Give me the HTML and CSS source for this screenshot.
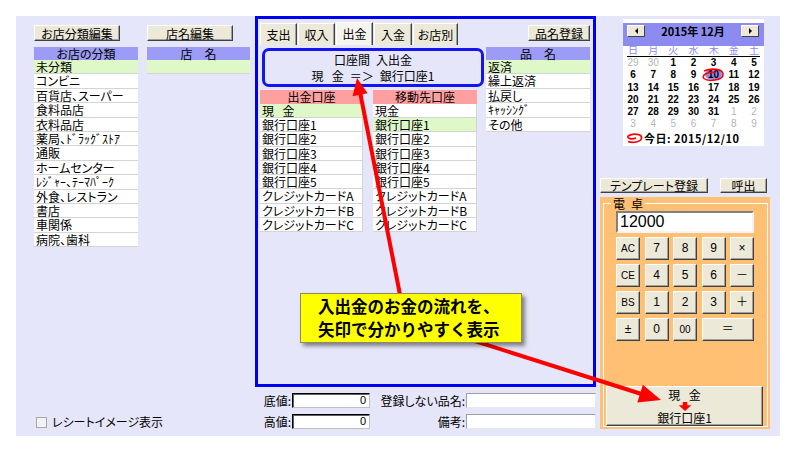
FILE: index.html
```html
<!DOCTYPE html>
<html lang="ja">
<head>
<meta charset="utf-8">
<title>家計簿</title>
<link rel="stylesheet" href="styles.css">
</head>
<body>
<div class="app">
  <div class="left">
    <div class="cols">
      <div class="col">
        <button class="btn btn-top">お店分類編集</button>
        <div class="hdr blue">お店の分類</div>
        <ul class="list">
          <li class="sel">未分類</li>
          <li>コンビニ</li>
          <li>百貨店、スーパー</li>
          <li>食料品店</li>
          <li>衣料品店</li>
          <li>薬局、ﾄﾞﾗｯｸﾞｽﾄｱ</li>
          <li>通販</li>
          <li>ホームセンター</li>
          <li>ﾚｼﾞｬｰ、ﾃｰﾏﾊﾟｰｸ</li>
          <li>外食、レストラン</li>
          <li>書店</li>
          <li>車関係</li>
          <li>病院、歯科</li>
        </ul>
      </div>
      <div class="col col2">
        <button class="btn btn-top">店名編集</button>
        <div class="hdr blue wide">店&ensp;&ensp;名</div>
        <ul class="list">
          <li class="sel"></li>
        </ul>
      </div>
    </div>
    <label class="chk"><span class="box"></span>レシートイメージ表示</label>
  </div>

  <div class="center">
    <div class="panel">
      <div class="tabs">
        <div class="tab w37">支出</div>
        <div class="tab w37">収入</div>
        <div class="tab w37 on">出金</div>
        <div class="tab w38">入金</div>
        <div class="tab w45">お店別</div>
        <button class="btn btn-reg">品名登録</button>
      </div>
      <div class="pbody">
        <div class="pleft">
          <div class="info">
            <div>口座間&ensp;入出金</div>
            <div>現&ensp;&thinsp;金&ensp;＝＞&ensp;銀行口座1</div>
          </div>
          <div class="mlists">
            <div class="mcol m1">
              <div class="hdr pink">出金口座</div>
              <ul class="list mlist">
                <li class="sel">現&ensp;&thinsp;金</li>
                <li>銀行口座1</li>
                <li>銀行口座2</li>
                <li>銀行口座3</li>
                <li>銀行口座4</li>
                <li>銀行口座5</li>
                <li>クレジットカードA</li>
                <li>クレジットカードB</li>
                <li>クレジットカードC</li>
              </ul>
            </div>
            <div class="mcol m2">
              <div class="hdr pink">移動先口座</div>
              <ul class="list mlist">
                <li>現金</li>
                <li class="sel">銀行口座1</li>
                <li>銀行口座2</li>
                <li>銀行口座3</li>
                <li>銀行口座4</li>
                <li>銀行口座5</li>
                <li>クレジットカードA</li>
                <li>クレジットカードB</li>
                <li>クレジットカードC</li>
              </ul>
            </div>
          </div>
        </div>
        <div class="pright">
          <div class="hdr blue wide">品&ensp;&ensp;名</div>
          <ul class="list ilist">
            <li class="sel">返済</li>
            <li>繰上返済</li>
            <li>払戻し</li>
            <li>ｷｬｯｼﾝｸﾞ</li>
            <li>その他</li>
          </ul>
        </div>
      </div>
    </div>
    <div class="form">
      <div class="lbl">底値:</div>
      <div class="inp dark">0</div>
      <div class="lbl">登録しない品名:</div>
      <div class="inp"></div>
      <div class="lbl">高値:</div>
      <div class="inp dark">0</div>
      <div class="lbl">備考:</div>
      <div class="inp"></div>
    </div>
  </div>

  <div class="right">
    <div class="cal">
      <div class="cal-head">
        <div class="cbtn"><span class="tri-l"></span></div>
        <div class="ctitle">2015年 12月</div>
        <div class="cbtn"><span class="tri-r"></span></div>
      </div>
      <div class="wk">
        <span>日</span><span>月</span><span>火</span><span>水</span><span>木</span><span>金</span><span>土</span>
      </div>
      <div class="days">
        <span class="g">29</span><span class="g">30</span><span>1</span><span>2</span><span>3</span><span>4</span><span>5</span>
        <span>6</span><span>7</span><span>8</span><span>9</span><span><b class="today">10</b></span><span>11</span><span>12</span>
        <span>13</span><span>14</span><span>15</span><span>16</span><span>17</span><span>18</span><span>19</span>
        <span>20</span><span>21</span><span>22</span><span>23</span><span>24</span><span>25</span><span>26</span>
        <span>27</span><span>28</span><span>29</span><span>30</span><span>31</span><span class="g">1</span><span class="g">2</span>
        <span class="g">3</span><span class="g">4</span><span class="g">5</span><span class="g">6</span><span class="g">7</span><span class="g">8</span><span class="g">9</span>
      </div>
      <div class="todayrow">
        <svg class="ticon" width="17" height="11" viewBox="0 0 17 11"><path d="M2 3 C 7 0, 16 1, 15.5 5 C 15 9.5, 6 10, 2 8.5 M2 3 C 1 6, 6 6.5, 10 5" fill="none" stroke="#f00" stroke-width="1.7"/></svg>
        <span>今日: 2015/12/10</span>
      </div>
      <svg class="scribble" width="141" height="127" viewBox="0 0 141 127"><path d="M81 52 C 89 48.5, 100 50, 100 55.5 C 100 61.5, 85 63, 81 59.5 C 78 56.5, 84 52.5, 92 53.5" fill="none" stroke="#f00" stroke-width="1.6"/></svg>
    </div>
    <div class="trow">
      <button class="btn btn-tpl">テンプレート登録</button>
      <button class="btn btn-call">呼出</button>
    </div>
    <div class="calc">
      <fieldset>
        <legend>電&ensp;卓</legend>
        <div class="display">12000</div>
        <div class="keys">
          <button class="btn key sm">AC</button>
          <button class="btn key">7</button>
          <button class="btn key">8</button>
          <button class="btn key">9</button>
          <button class="btn key">×</button>
          <button class="btn key sm">CE</button>
          <button class="btn key">4</button>
          <button class="btn key">5</button>
          <button class="btn key">6</button>
          <button class="btn key">－</button>
          <button class="btn key sm">BS</button>
          <button class="btn key">1</button>
          <button class="btn key">2</button>
          <button class="btn key">3</button>
          <button class="btn key">＋</button>
          <button class="btn key">±</button>
          <button class="btn key">0</button>
          <button class="btn key sm">00</button>
          <button class="btn key eq">＝</button>
        </div>
        <button class="btn big">
          <span class="bl">現&ensp;&thinsp;金</span>
          <svg class="darr" width="16" height="10" viewBox="0 0 16 10"><path d="M5.5 0 H10.5 V3.5 H15 L8 10 L1 3.5 H5.5 Z" fill="#f00"/></svg>
          <span class="bl">銀行口座1</span>
        </button>
      </fieldset>
    </div>
  </div>
</div>

<svg class="arrows" width="800" height="450" viewBox="0 0 800 450">
  <line x1="405" y1="320" x2="360" y2="92" stroke="#f00" stroke-width="4"/>
  <polygon points="357,78 352.6,96.2 367.6,93.3" fill="#f00"/>
  <line x1="440" y1="330" x2="643" y2="394.5" stroke="#f00" stroke-width="4"/>
  <polygon points="661,400 642.8,384.8 637.3,402.4" fill="#f00"/>
</svg>
<div class="callout">
  <div>入出金のお金の流れを、</div>
  <div>矢印で分かりやすく表示</div>
</div>
</body>
</html>
```

FILE: styles.css
```css
* { box-sizing: border-box; }
html, body { margin: 0; padding: 0; background: #fff; }
body {
  position: relative;
  width: 800px;
  height: 450px;
  overflow: hidden;
  font-family: "Noto Sans CJK JP", "Noto Sans", sans-serif;
  font-size: 12px;
  font-feature-settings: "palt";
  color: #000;
}
.app {
  margin: 16px 0 0 16px;
  width: 764px;
  height: 420px;
  background: #e6e6fa;
  display: flex;
}

/* generic */
.btn {
  font-family: inherit;
  font-feature-settings: "palt";
  font-size: 12px;
  line-height: 13px;
  padding: 0;
  color: #000;
  background: #ece9d8;
  border: 1px solid;
  border-color: #fff #404040 #404040 #fff;
  box-shadow: inset -1px -1px 0 #a0a0a0;
  white-space: nowrap;
}
.hdr {
  height: 13px;
  line-height: 13px;
  text-align: center;
  white-space: nowrap;
}
.blue { background: #9c9cf6; }
.pink { background: #ffa0a0; height: 14px; line-height: 14px; }
.list { list-style: none; margin: 0; padding: 0; }
.list li {
  height: 14.4px;
  line-height: 13.4px;
  background: #fff;
  border-bottom: 1px solid #d4d4d4;
  padding-left: 2px;
  white-space: nowrap;
}
.list li.sel { background: #def8c8; }

/* left */
.left {
  width: 239px;
  display: flex;
  flex-direction: column;
  padding: 9px 0 0 18px;
}
.cols { display: flex; gap: 9px; }
.col { width: 104px; }
.col2 { width: 103px; }
.btn-top { display: block; width: 86px; height: 16px; margin-bottom: 6px; }
.chk {
  margin: auto 0 8px 2px;
  display: flex;
  align-items: center;
  gap: 5px;
  height: 12px;
  line-height: 12px;
}
.box {
  width: 11px;
  height: 11px;
  border: 1px solid #a8a8a8;
  background: #f2f2f2;
}

/* center */
.center { width: 341px; display: flex; flex-direction: column; }
.panel {
  height: 371px;
  border: 3px solid #0000f0;
  padding: 3px 3px 0 2px;
}
.tabs { display: flex; align-items: flex-end; height: 23px; }
.tab {
  height: 22px;
  line-height: 21px;
  text-align: center;
  background: #ece9d8;
  border: 1px solid;
  border-color: #fff #404040 transparent #fff;
  border-bottom: none;
  box-shadow: inset -1px 0 0 #a0a0a0;
  margin-right: 1px;
}
.tab.on { height: 23px; background: #f5f4ee; }
.w37 { width: 37px; }
.w38 { width: 38px; }
.w45 { width: 45px; }
.btn-reg { margin-left: auto; align-self: flex-start; margin-top: 3px; width: 62px; height: 16px; }
.pbody { display: flex; }
.pleft { width: 226px; }
.info {
  margin: 3px 0 0 2px;
  width: 222px;
  height: 39px;
  border: 3px solid #1414f0;
  border-radius: 7px;
  text-align: center;
  line-height: 16px;
  padding-top: 1px;
}
.mlists { display: flex; gap: 10px; margin-top: 3px; }
.m1 { width: 103px; }
.m2 { width: 104px; }
.mlist li { height: 14.22px; line-height: 13.2px; border-right: 1px solid #d4d4d4; }
.pright { width: 104px; margin-top: 2px; }

.form {
  display: grid;
  grid-template-columns: 37px 78px 96px 130px;
  grid-auto-rows: 15px;
  row-gap: 6px;
  margin-top: 6px;
}
.lbl { text-align: right; line-height: 15px; padding-right: 1px; white-space: nowrap; }
.inp {
  background: #fff;
  border: 1px solid;
  border-color: #a0a0a0 #e8e8e8 #e8e8e8 #a0a0a0;
  text-align: right;
  padding-right: 3px;
  line-height: 13px;
  font-family: "Liberation Sans", sans-serif;
  font-size: 11px;
}
.inp.dark { border-color: #000 #c0c0c0 #c0c0c0 #000; box-shadow: inset 1px 1px 0 #606060; }

/* right */
.right { width: 184px; padding-left: 4px; display: flex; flex-direction: column; }
.cal {
  position: relative;
  margin: 3px 0 0 23px;
  width: 141px;
  height: 127px;
  background: #fff;
  padding-top: 4px;
}
.cal-head {
  height: 23px;
  background: #8c8cf0;
  display: flex;
  align-items: flex-start;
  justify-content: space-between;
  padding: 2px 5px 0 4px;
}
.cbtn {
  width: 18px;
  height: 12px;
  background: #ece9d8;
  border: 1px solid;
  border-color: #fff #404040 #404040 #fff;
  display: flex;
  align-items: center;
  justify-content: center;
}
.tri-l { width: 0; height: 0; border: 3px solid transparent; border-right: 3px solid #000; border-left: none; }
.tri-r { width: 0; height: 0; border: 3px solid transparent; border-left: 3px solid #000; border-right: none; }
.ctitle { font-weight: bold; font-size: 11px; line-height: 13px; white-space: nowrap; }
.wk {
  display: grid;
  grid-template-columns: repeat(7, 1fr);
  height: 11px;
  font-size: 10px;
  color: #8c8cf0;
  text-align: center;
  background: linear-gradient(#000, #000) no-repeat center bottom / calc(100% - 8px) 1px;
}
.wk span { display: block; height: 11px; line-height: 7px; }
.days {
  display: grid;
  grid-template-columns: repeat(7, 1fr);
  grid-auto-rows: 12.3px;
  line-height: 12.3px;
  text-align: center;
  font-family: "Liberation Sans", sans-serif;
  font-weight: bold;
  font-size: 10px;
}
.days .g { color: #b4b4b4; font-weight: normal; }
.today { display: inline-block; background: #8c8cf0; border-radius: 50%; padding: 0 3px; line-height: 11px; }
.todayrow {
  display: flex;
  align-items: center;
  height: 15px;
  padding-left: 3px;
  gap: 1px;
  font-weight: bold;
  font-size: 11px;
  letter-spacing: 0.5px;
}
.scribble { position: absolute; left: 0; top: 0; pointer-events: none; }

.trow { display: flex; gap: 12px; margin-top: 32px; }
.btn-tpl { width: 108px; height: 15px; }
.btn-call { width: 47px; height: 15px; }

.calc {
  margin-top: 4px;
  width: 170px;
  height: 232px;
  background: #ffc073;
  padding: 0 2px 2px 3px;
}
.calc fieldset {
  margin: 0;
  padding: 0;
  border: 1px solid #fff;
  height: 100%;
  min-width: 0;
}
.calc legend {
  margin-left: 7px;
  padding: 0 2px;
  font-size: 12px;
  line-height: 13px;
}
.display {
  margin: 1px 0 0 12px;
  width: 138px;
  height: 22px;
  background: #fff;
  border: 2px solid;
  border-color: #808080 #f4f4f4 #f4f4f4 #808080;
  font-family: "Liberation Sans", sans-serif;
  font-size: 16px;
  line-height: 18px;
  padding-left: 2px;
}
.keys {
  display: grid;
  grid-template-columns: repeat(5, 24px);
  grid-auto-rows: 23px;
  column-gap: 4.5px;
  row-gap: 4px;
  margin: 4px 0 0 12px;
}
.key { font-family: "Liberation Sans", "Noto Sans CJK JP", sans-serif; font-size: 12px; }
.key.sm { font-size: 10px; }
.key.eq { grid-column: span 2; }
.big {
  display: flex;
  flex-direction: column;
  align-items: center;
  margin: 45px 0 0 2px;
  width: 157px;
  height: 40px;
  padding-top: 1px;
}
.bl { display: block; height: 14px; line-height: 14px; }
.darr { display: block; }

/* overlays */
.arrows { position: absolute; left: 0; top: 0; z-index: 5; pointer-events: none; }
.callout {
  position: absolute;
  left: 300px;
  top: 293px;
  width: 222px;
  height: 50px;
  z-index: 6;
  background: #ffff00;
  border: 1px solid #8c8c60;
  box-shadow: 3px 3px 4px rgba(0, 0, 0, 0.45);
  padding: 1px 0 0 17px;
  font-weight: bold;
  font-size: 16.5px;
  line-height: 23px;
  white-space: nowrap;
  font-feature-settings: normal;
}
```
